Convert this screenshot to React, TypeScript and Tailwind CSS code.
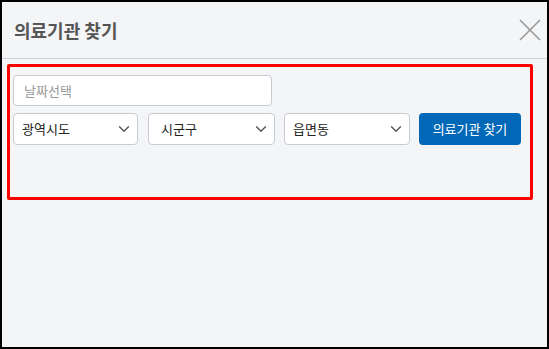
import { ChevronDown } from "lucide-react";

const font = { fontFamily: '"Noto Sans CJK KR", "Noto Sans", sans-serif' };

function Select({ label, className }: { label: string; className: string }) {
  return (
    <div
      className={`flex h-[32px] items-center justify-between rounded border border-[#c8cbd0] bg-white pl-[8px] pr-[4px] text-[13px] text-[#222] ${className}`}
    >
      <span>{label}</span>
      <ChevronDown size={18} strokeWidth={1.8} className="text-[#555]" />
    </div>
  );
}

export default function App() {
  return (
    <div
      style={font}
      className="flex h-[349px] w-[549px] flex-col border-2 border-black bg-[#f4f5f7]"
    >
      {/* 헤더 */}
      <div className="flex h-[57px] shrink-0 items-center justify-between border-b border-[#cfd2d6] pl-3 pr-[5px]">
        <h1 className="text-[18px] font-bold text-[#555]">의료기관 찾기</h1>
        <svg width="24" height="24" viewBox="0 0 24 24" className="text-[#999]">
          <path d="M2 2 L22 22 M22 2 L2 22" stroke="currentColor" strokeWidth="1.6" fill="none" />
        </svg>
      </div>

      {/* 검색 영역 */}
      <div className="pl-[5px] pt-[5px]">
        <div className="h-[136px] w-[526px] rounded-[2px] border-[3px] border-[#ff0000] pl-[3px] pt-2">
          <div className="flex h-[31px] w-[259px] items-center rounded border border-[#c8cbd0] bg-white pl-[10px] text-[13px] text-[#999]">
            날짜선택
          </div>
          <div className="mt-[7px] flex">
            <Select label="광역시도" className="w-[125px]" />
            <Select label="시군구" className="ml-[10px] w-[127px] pl-[12px]" />
            <Select label="읍면동" className="ml-[9px] w-[126px]" />
            <button className="ml-[9px] h-[32px] w-[102px] rounded bg-[#0068b7] text-[13px] text-white">
              의료기관 찾기
            </button>
          </div>
        </div>
      </div>
    </div>
  );
}
